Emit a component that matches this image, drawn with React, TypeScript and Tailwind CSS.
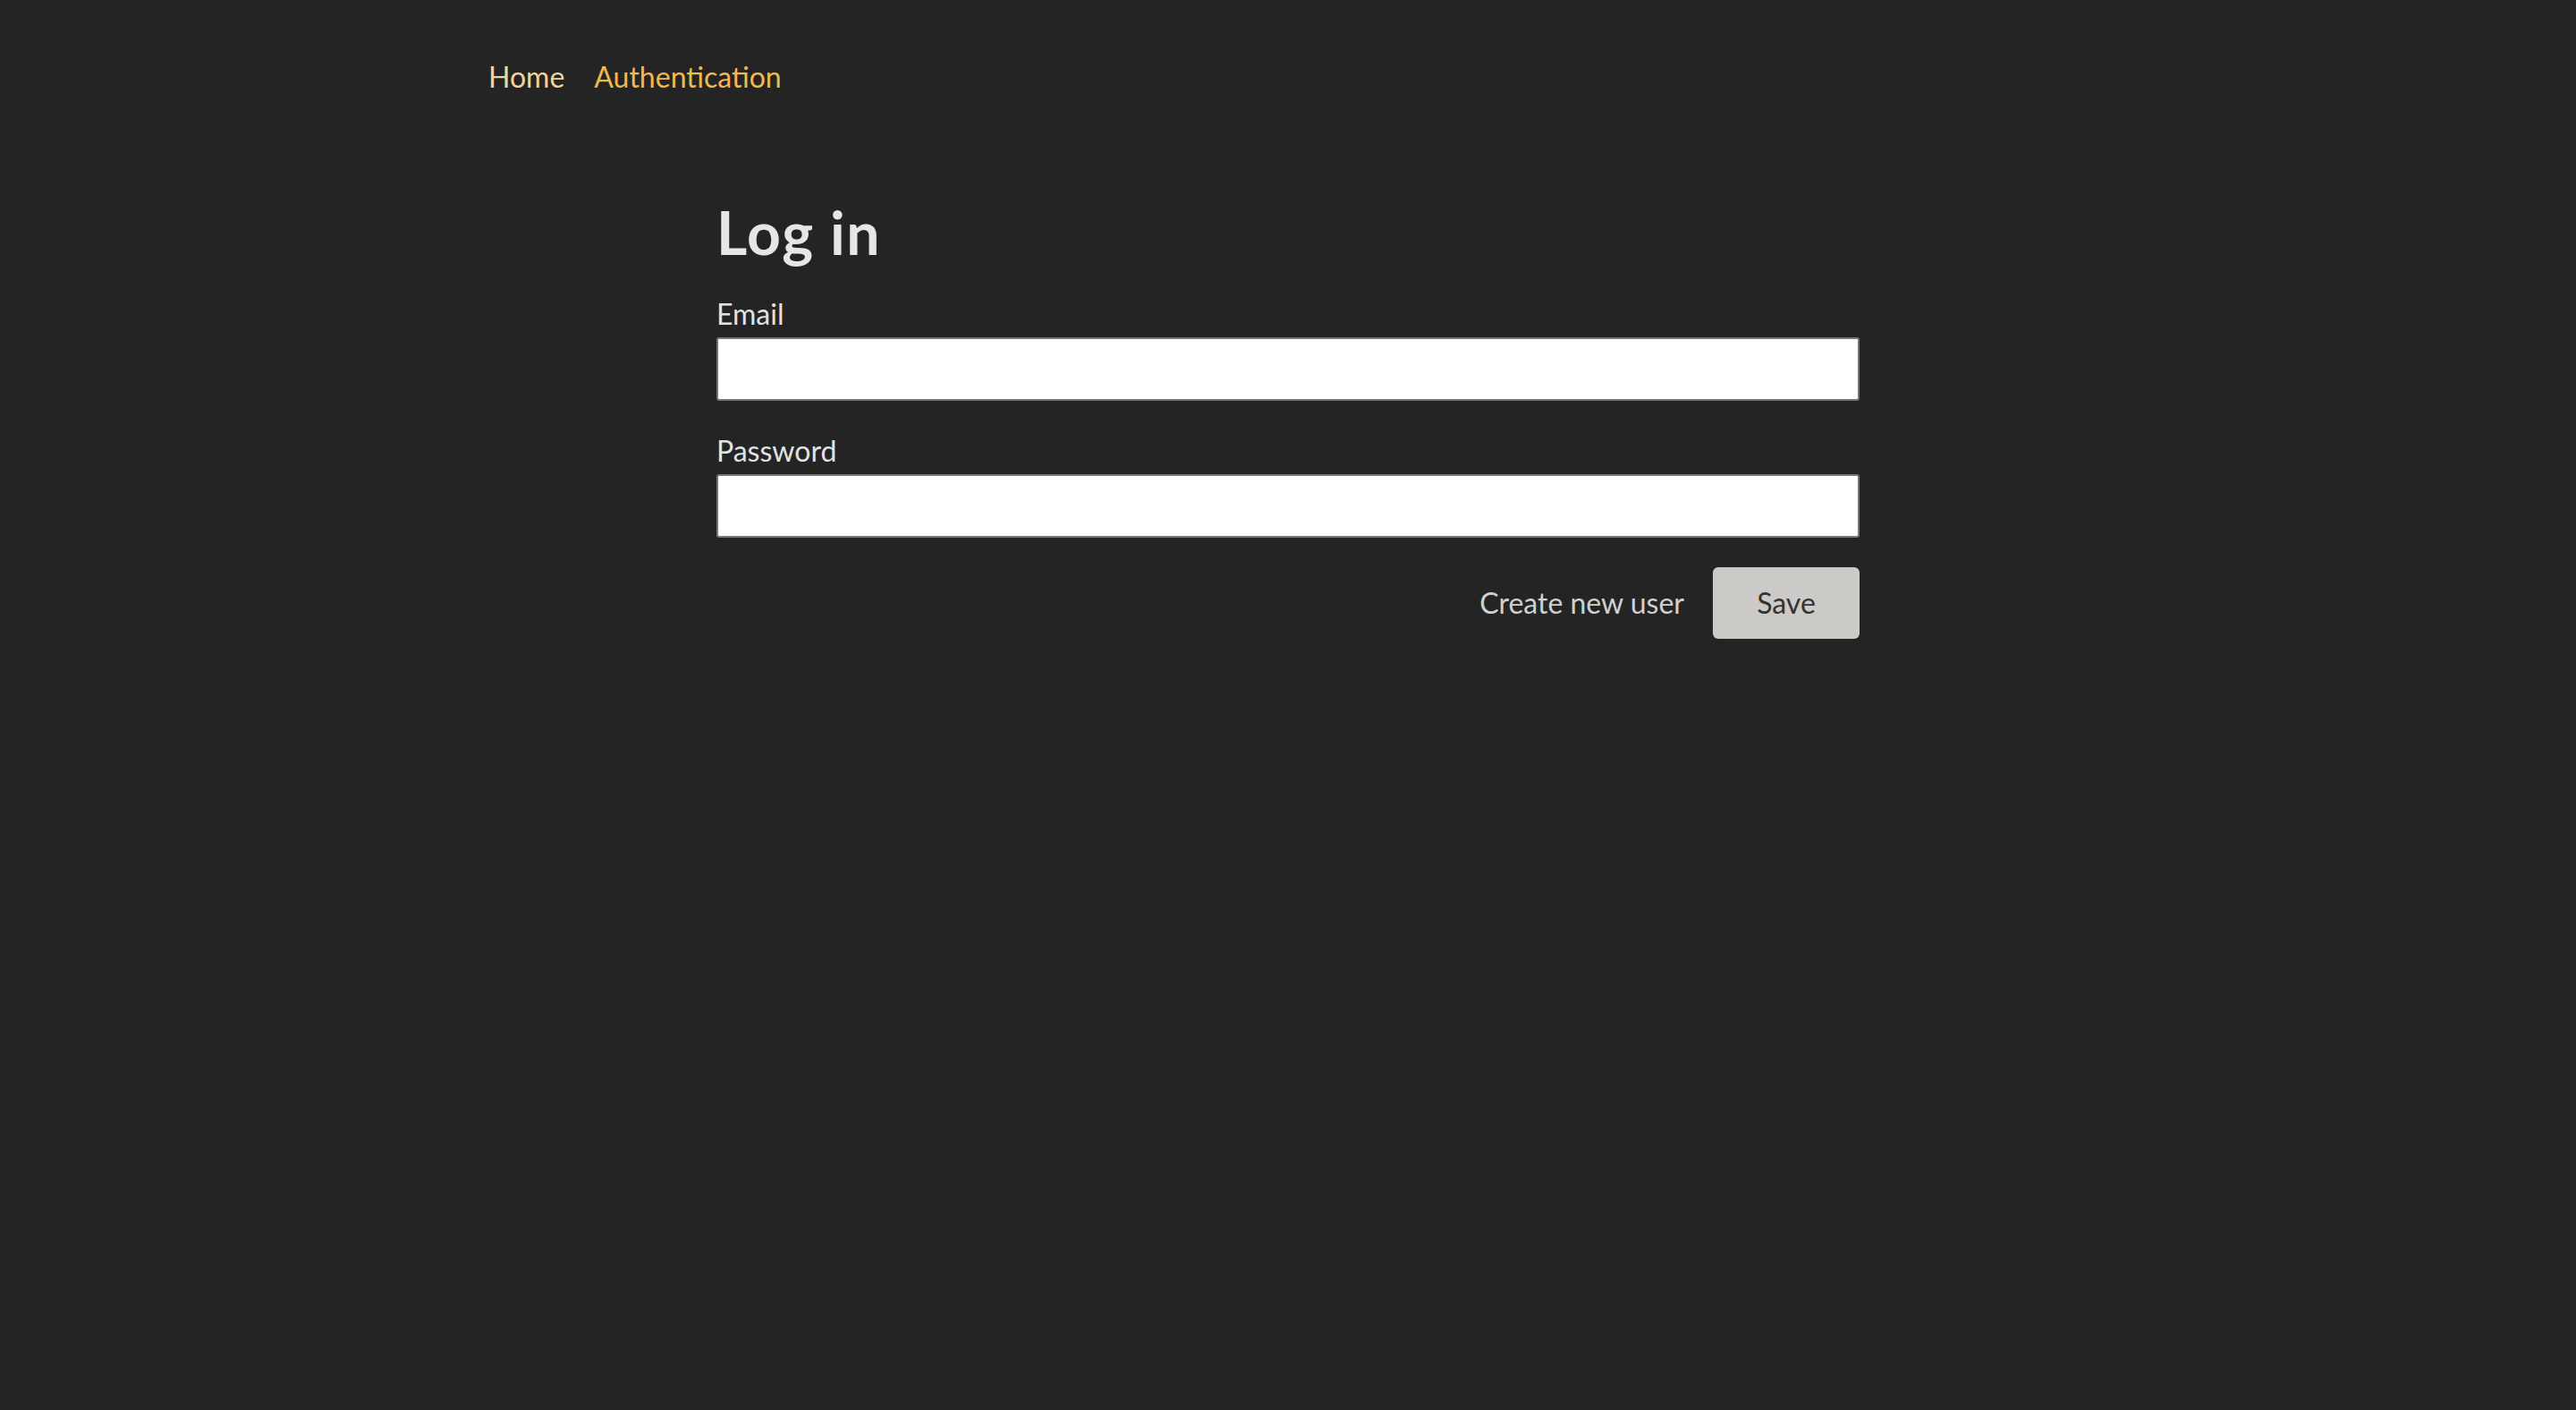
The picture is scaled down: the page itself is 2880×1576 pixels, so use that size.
import React from "react";

const font = { fontFamily: "Lato, 'Noto Sans', sans-serif" };

const Field: React.FC<{ label: string; type: string; first?: boolean }> = ({ label, type, first }) => {
  return (
    <div className={first ? "mt-[31px]" : "mt-[36px]"}>
      <label className="block text-[32px] leading-[40px] text-[#e2e2e2]">{label}</label>
      <input
        type={type}
        className="mt-[6px] block h-[71px] w-full rounded-[3px] border-2 border-[#777777] bg-white px-3 text-[28px] text-[#222] outline-none"
      />
    </div>
  );
};

const App: React.FC = () => {
  return (
    <div className="min-h-screen w-full bg-[#242424]" style={font}>
      <nav className="mx-auto flex w-[1788px] gap-[33px] pt-[62px] text-[32px] leading-[48px]">
        <a href="#" className="text-[#efd59d]">Home</a>
        <a href="#" className="text-[#f1b94b]">Authentication</a>
      </nav>

      <main className="mx-auto w-[1278px] pt-[110px]">
        <h1 className="text-[66px] font-bold leading-[80px] tracking-[1.5px] text-[#e6e6e6]">Log in</h1>
        <form>
          <Field label="Email" type="email" first />
          <Field label="Password" type="password" />
          <div className="mt-[33px] flex items-center justify-end gap-[32px]">
            <a href="#" className="text-[32px] leading-[48px] text-[#d0d0d0]">Create new user</a>
            <button
              type="button"
              className="h-[80px] w-[164px] rounded-[6px] bg-[#cbcac6] text-[32px] text-[#333333]"
            >
              Save
            </button>
          </div>
        </form>
      </main>
    </div>
  );
};

export default App;
